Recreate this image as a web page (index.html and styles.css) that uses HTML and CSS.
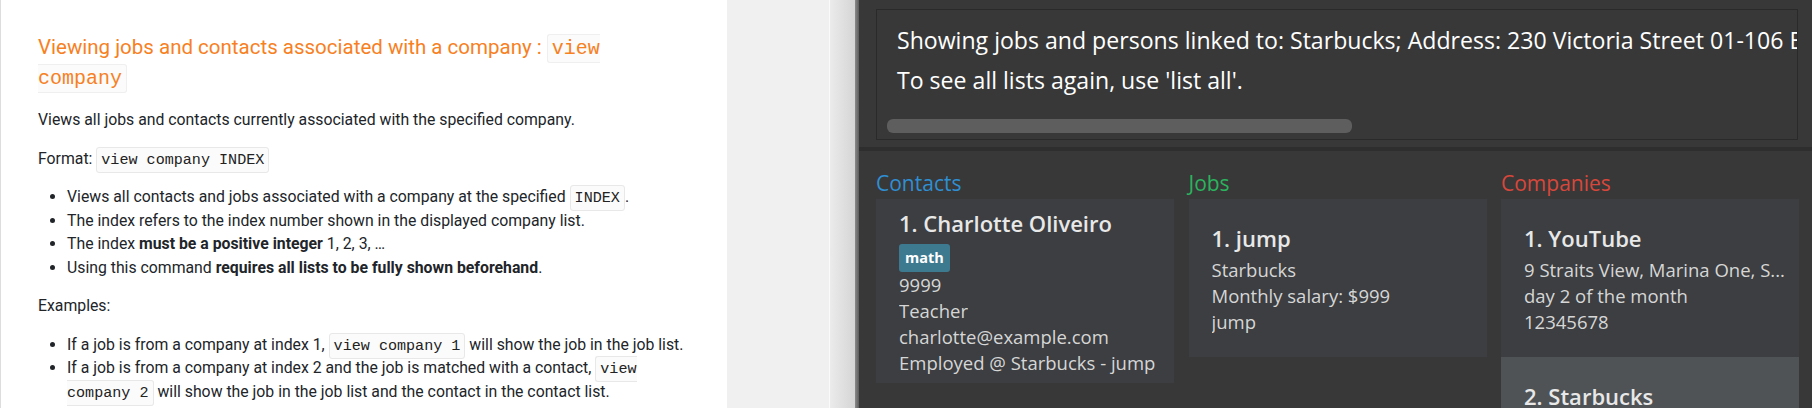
FILE: index.html
```html
<!DOCTYPE html>
<html lang="en">
<head>
<meta charset="utf-8">
<title>View company</title>
<link rel="stylesheet" href="styles.css">
</head>
<body>
<div class="page">
  <section class="docs">
    <h3 class="doc-title">Viewing jobs and contacts associated with a company : <code>view company</code></h3>
    <p>Views all jobs and contacts currently associated with the specified company.</p>
    <p>Format: <code>view company INDEX</code></p>
    <ul>
      <li>Views all contacts and jobs associated with a company at the specified <code>INDEX</code>.</li>
      <li>The index refers to the index number shown in the displayed company list.</li>
      <li>The index <strong>must be a positive integer</strong> 1, 2, 3, …</li>
      <li>Using this command <strong>requires all lists to be fully shown beforehand</strong>.</li>
    </ul>
    <p>Examples:</p>
    <ul>
      <li>If a job is from a company at index 1, <code>view company 1</code> will show the job in the job list.</li>
      <li>If a job is from a company at index 2 and the job is matched with a contact, <code>view company 2</code> will show the job in the job list and the contact in the contact list.</li>
    </ul>
  </section>
  <div class="gutter"></div>
  <div class="gutter-line"></div>
  <div class="shade"></div>
  <div class="frame"></div>
  <section class="app">
    <div class="result">
      <div class="result-box">
        <div class="result-text">
          <p>Showing jobs and persons linked to: Starbucks; Address: 230 Victoria Street 01-106 Bugis Junction; Billing date: day 15 of the month; Phone: 98765432</p>
          <p>To see all lists again, use 'list all'.</p>
        </div>
        <div class="hscroll"><div class="thumb"></div></div>
      </div>
    </div>
    <div class="lists">
      <div class="col">
        <h2 class="col-title contacts">Contacts</h2>
        <div class="card">
          <div class="card-title">1. Charlotte Oliveiro</div>
          <span class="tag">math</span>
          <div class="card-line">9999</div>
          <div class="card-line">Teacher</div>
          <div class="card-line">charlotte@example.com</div>
          <div class="card-line">Employed @ Starbucks - jump</div>
        </div>
      </div>
      <div class="col">
        <h2 class="col-title jobs">Jobs</h2>
        <div class="card">
          <div class="card-title">1. jump</div>
          <div class="card-line">Starbucks</div>
          <div class="card-line">Monthly salary: $999</div>
          <div class="card-line">jump</div>
        </div>
      </div>
      <div class="col">
        <h2 class="col-title companies">Companies</h2>
        <div class="card">
          <div class="card-title">1. YouTube</div>
          <div class="card-line">9 Straits View, Marina One, S...</div>
          <div class="card-line">day 2 of the month</div>
          <div class="card-line">12345678</div>
        </div>
        <div class="card selected">
          <div class="card-title">2. Starbucks</div>
          <div class="card-line">230 Victoria Street 01-106 B...</div>
          <div class="card-line">day 15 of the month</div>
          <div class="card-line">98765432</div>
        </div>
      </div>
    </div>
  </section>
</div>
</body>
</html>
```

FILE: styles.css
```css
* {
  box-sizing: border-box;
  margin: 0;
  padding: 0;
}

html,
body {
  width: 1812px;
  height: 408px;
  overflow: hidden;
  background: #ffffff;
}

.page {
  display: flex;
  height: 408px;
}

/* ---------- documentation panel ---------- */
.docs {
  flex: none;
  width: 727px;
  height: 408px;
  overflow: hidden;
  background: #ffffff;
  border-left: 1px solid #dddddd;
  padding: 32px 35px 0 37px;
  font-family: Roboto, "Liberation Sans", sans-serif;
  font-size: 15.8px;
  line-height: 23.5px;
  color: #212529;
}

.doc-title {
  font-size: 20.5px;
  line-height: 30px;
  font-weight: 400;
  color: #f7801f;
  margin-bottom: 16px;
}

.docs p {
  margin-bottom: 15px;
}

.docs ul {
  padding-left: 29px;
  margin-bottom: 15px;
}

.docs strong {
  font-weight: 700;
}

.docs code {
  font-family: "Liberation Mono", "DejaVu Sans Mono", monospace;
  font-size: 15.1px;
  line-height: 1;
  padding: 3px 4px;
  border: 1px solid #e8e8e8;
  border-radius: 3px;
  background: #fbfbfb;
  color: #222222;
}

.doc-title code {
  font-size: 20px;
  padding: 2px 4px;
  color: #f7801f;
  border-color: #efefef;
}

/* ---------- separator between page and screenshot ---------- */
.gutter {
  flex: none;
  width: 102px;
  background: #f0f0f0;
}

.gutter-line {
  flex: none;
  width: 1px;
  background: #fafafa;
}

.shade {
  flex: none;
  width: 25px;
  background: linear-gradient(to right, #ebebeb, #d5d5d5);
}

.frame {
  flex: none;
  width: 4px;
  background: linear-gradient(to right, #8a8a8a, #5c5c5c);
}

/* ---------- application panel ---------- */
.app {
  flex: 1;
  min-width: 0;
  display: flex;
  flex-direction: column;
  background: #383838;
  font-family: "Open Sans", "Noto Sans", sans-serif;
  overflow: hidden;
}

.result {
  flex: none;
  padding: 9px 14px 7px 17px;
  border-bottom: 4px solid #2e2e2e;
}

.result-box {
  height: 131px;
  border: 1px solid #2a2a2a;
  padding-top: 10px;
  overflow: hidden;
}

.result-text {
  padding-left: 20px;
  font-size: 23.1px;
  line-height: 40px;
  color: #ffffff;
  white-space: nowrap;
}

.hscroll {
  margin-top: 19px;
  padding-left: 10px;
}

.thumb {
  width: 465px;
  height: 14px;
  border-radius: 6px;
  background: #5e5e5e;
}

.lists {
  flex: 1;
  display: grid;
  grid-template-columns: repeat(3, 298px);
  column-gap: 14.5px;
  padding: 19px 0 0 17px;
  align-items: start;
}

.col {
  display: flex;
  flex-direction: column;
}

.col-title {
  font-size: 21px;
  line-height: 26px;
  font-weight: 400;
  margin-bottom: 3px;
}

.contacts { color: #2f8fd3; }
.jobs { color: #2bb35e; }
.companies { color: #d8473b; }

.card {
  min-height: 158px;
  display: flex;
  flex-direction: column;
  justify-content: center;
  align-items: flex-start;
  padding: 9px 12px 7px 23px;
  background: #3c3e41;
}

.card.selected {
  background: #4f5356;
}

.card-title {
  font-size: 22px;
  line-height: 30px;
  font-weight: 600;
  color: #e8e8e8;
  margin-bottom: 4px;
}

.card-line {
  max-width: 100%;
  font-size: 18.5px;
  line-height: 26px;
  color: #d6d6d6;
  white-space: nowrap;
  overflow: hidden;
}

.tag {
  display: block;
  margin: 2px 0 0;
  height: 28px;
  line-height: 28px;
  padding: 0 6px;
  border-radius: 3px;
  background: #3d7a90;
  color: #ffffff;
  font-size: 14.5px;
  font-weight: 700;
}
```
